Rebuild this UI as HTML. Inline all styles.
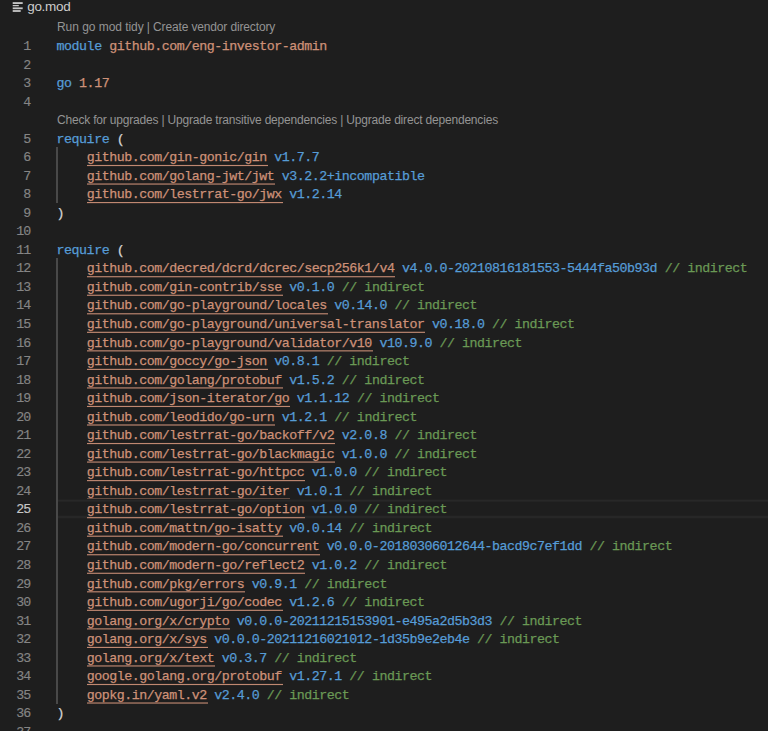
<!DOCTYPE html>
<html><head><meta charset="utf-8"><title>go.mod</title>
<style>
html,body{margin:0;padding:0;}
body{width:768px;height:731px;background:#1e1e1e;overflow:hidden;position:relative;font-family:"Liberation Mono",monospace;}
.title{position:absolute;left:27.2px;top:-1px;font-family:"Liberation Sans",sans-serif;font-size:13.5px;color:#cccccc;line-height:16px;white-space:pre;letter-spacing:-0.3px}
.icon{position:absolute;left:12px;top:2px}
.lens{position:absolute;left:57px;height:19px;line-height:19px;font-family:"Liberation Sans",sans-serif;font-size:12px;color:#949494;white-space:pre;letter-spacing:0px;}
.ln{position:absolute;left:0;width:30.4px;text-align:right;height:19px;line-height:19px;font-size:13.3px;letter-spacing:-0.9px;color:#858585;-webkit-text-stroke:0.15px}
.ln.act{color:#c6c6c6}
.code{position:absolute;left:56.6px;height:19px;line-height:19px;font-size:13.3px;letter-spacing:-0.473px;white-space:pre;color:#d4d4d4;-webkit-text-stroke:0.25px}
.guide{position:absolute;left:56px;width:2px;background:#494949}
.cur{position:absolute;left:58px;right:0;height:18.3px;margin-top:-0.7px;box-sizing:border-box;border-top:1px solid #282828;border-bottom:1px solid #282828}
.k{color:#569cd6}.s{color:#ce9178}.p{color:#d4d4d4}.v{color:#569cd6}.c{color:#6a9955}
.u{color:#ce9178}
.cb{position:absolute;left:58px;right:0;height:1px}
.ul{position:absolute;height:1px;background:#ce9178}
</style></head><body>
<svg class="icon" width="16" height="16" viewBox="0 0 16 16"><g fill="#c6c6c6"><rect x="0.7" y="0.15" width="10" height="1.85"/><rect x="0.7" y="2.95" width="6.1" height="1.3"/><rect x="0.7" y="5.4" width="10" height="1.8"/><rect x="0.7" y="8.1" width="8" height="1.8"/></g></svg>
<div class="title">go.mod</div>
<div class="lens" style="top:18px;letter-spacing:-0.1px"><span style="letter-spacing:-0.05px">Run go mod tidy</span><span style="letter-spacing:-0.14px"> | Create vendor directory</span></div>
<div class="ln" style="top:37px">1</div>
<div class="code" style="top:37px"><span class="k">module</span><span class="s"> github.com/eng-investor-admin</span></div>
<div class="ln" style="top:56px">2</div>
<div class="ln" style="top:74px">3</div>
<div class="code" style="top:74px"><span class="k">go</span><span class="s"> 1.17</span></div>
<div class="ln" style="top:93px">4</div>
<div class="lens" style="top:111px;letter-spacing:-0.19px">Check for upgrades | Upgrade transitive dependencies | Upgrade direct dependencies</div>
<div class="ln" style="top:130px">5</div>
<div class="code" style="top:130px"><span class="k">require</span><span class="p"> (</span></div>
<div class="ln" style="top:148px">6</div>
<div class="code" style="top:148px">    <span class="u">github.com/gin-gonic/gin</span><span class="v"> v1.7.7</span></div>
<div class="ul" style="top:164px;left:87.03px;width:180.79px;opacity:0.06"></div>
<div class="ul" style="top:165px;left:87.03px;width:180.79px;opacity:0.92"></div>
<div class="ul" style="top:166px;left:87.03px;width:180.79px;opacity:0.08"></div>
<div class="ln" style="top:167px">7</div>
<div class="code" style="top:167px">    <span class="u">github.com/golang-jwt/jwt</span><span class="v"> v3.2.2+incompatible</span></div>
<div class="ul" style="top:183px;left:87.03px;width:188.3px;opacity:0.49"></div>
<div class="ul" style="top:184px;left:87.03px;width:188.3px;opacity:0.57"></div>
<div class="ln" style="top:185px">8</div>
<div class="code" style="top:185px">    <span class="u">github.com/lestrrat-go/jwx</span><span class="v"> v1.2.14</span></div>
<div class="ul" style="top:202px;left:87.03px;width:195.81px;opacity:0.92"></div>
<div class="ul" style="top:203px;left:87.03px;width:195.81px;opacity:0.14"></div>
<div class="ln" style="top:204px">9</div>
<div class="code" style="top:204px"><span class="p">)</span></div>
<div class="ln" style="top:222px">10</div>
<div class="ln" style="top:241px">11</div>
<div class="code" style="top:241px"><span class="k">require</span><span class="p"> (</span></div>
<div class="ln" style="top:259px">12</div>
<div class="code" style="top:259px">    <span class="u">github.com/decred/dcrd/dcrec/secp256k1/v4</span><span class="v"> v4.0.0-20210816181553-5444fa50b93d</span><span class="c"> // indirect</span></div>
<div class="ul" style="top:276px;left:87.03px;width:308.43px;opacity:0.79"></div>
<div class="ul" style="top:277px;left:87.03px;width:308.43px;opacity:0.27"></div>
<div class="ln" style="top:278px">13</div>
<div class="code" style="top:278px">    <span class="u">github.com/gin-contrib/sse</span><span class="v"> v0.1.0</span><span class="c"> // indirect</span></div>
<div class="ul" style="top:294px;left:87.03px;width:195.81px;opacity:0.29"></div>
<div class="ul" style="top:295px;left:87.03px;width:195.81px;opacity:0.76"></div>
<div class="ln" style="top:296px">14</div>
<div class="code" style="top:296px">    <span class="u">github.com/go-playground/locales</span><span class="v"> v0.14.0</span><span class="c"> // indirect</span></div>
<div class="ul" style="top:313px;left:87.03px;width:240.86px;opacity:0.72"></div>
<div class="ul" style="top:314px;left:87.03px;width:240.86px;opacity:0.34"></div>
<div class="ln" style="top:315px">15</div>
<div class="code" style="top:315px">    <span class="u">github.com/go-playground/universal-translator</span><span class="v"> v0.18.0</span><span class="c"> // indirect</span></div>
<div class="ul" style="top:331px;left:87.03px;width:338.46px;opacity:0.23"></div>
<div class="ul" style="top:332px;left:87.03px;width:338.46px;opacity:0.83"></div>
<div class="ln" style="top:334px">16</div>
<div class="code" style="top:334px">    <span class="u">github.com/go-playground/validator/v10</span><span class="v"> v10.9.0</span><span class="c"> // indirect</span></div>
<div class="ul" style="top:350px;left:87.03px;width:285.9px;opacity:0.66"></div>
<div class="ul" style="top:351px;left:87.03px;width:285.9px;opacity:0.4"></div>
<div class="ln" style="top:352px">17</div>
<div class="code" style="top:352px">    <span class="u">github.com/goccy/go-json</span><span class="v"> v0.8.1</span><span class="c"> // indirect</span></div>
<div class="ul" style="top:368px;left:87.03px;width:180.79px;opacity:0.17"></div>
<div class="ul" style="top:369px;left:87.03px;width:180.79px;opacity:0.89"></div>
<div class="ln" style="top:371px">18</div>
<div class="code" style="top:371px">    <span class="u">github.com/golang/protobuf</span><span class="v"> v1.5.2</span><span class="c"> // indirect</span></div>
<div class="ul" style="top:387px;left:87.03px;width:195.81px;opacity:0.59"></div>
<div class="ul" style="top:388px;left:87.03px;width:195.81px;opacity:0.46"></div>
<div class="ln" style="top:389px">19</div>
<div class="code" style="top:389px">    <span class="u">github.com/json-iterator/go</span><span class="v"> v1.1.12</span><span class="c"> // indirect</span></div>
<div class="ul" style="top:405px;left:87.03px;width:203.32px;opacity:0.1"></div>
<div class="ul" style="top:406px;left:87.03px;width:203.32px;opacity:0.92"></div>
<div class="ul" style="top:407px;left:87.03px;width:203.32px;opacity:0.04"></div>
<div class="ln" style="top:408px">20</div>
<div class="code" style="top:408px">    <span class="u">github.com/leodido/go-urn</span><span class="v"> v1.2.1</span><span class="c"> // indirect</span></div>
<div class="ul" style="top:424px;left:87.03px;width:188.3px;opacity:0.53"></div>
<div class="ul" style="top:425px;left:87.03px;width:188.3px;opacity:0.53"></div>
<div class="ln" style="top:426px">21</div>
<div class="code" style="top:426px">    <span class="u">github.com/lestrrat-go/backoff/v2</span><span class="v"> v2.0.8</span><span class="c"> // indirect</span></div>
<div class="ul" style="top:442px;left:87.03px;width:248.36px;opacity:0.04"></div>
<div class="ul" style="top:443px;left:87.03px;width:248.36px;opacity:0.92"></div>
<div class="ul" style="top:444px;left:87.03px;width:248.36px;opacity:0.1"></div>
<div class="ln" style="top:445px">22</div>
<div class="code" style="top:445px">    <span class="u">github.com/lestrrat-go/blackmagic</span><span class="v"> v1.0.0</span><span class="c"> // indirect</span></div>
<div class="ul" style="top:461px;left:87.03px;width:248.36px;opacity:0.46"></div>
<div class="ul" style="top:462px;left:87.03px;width:248.36px;opacity:0.59"></div>
<div class="ln" style="top:463px">23</div>
<div class="code" style="top:463px">    <span class="u">github.com/lestrrat-go/httpcc</span><span class="v"> v1.0.0</span><span class="c"> // indirect</span></div>
<div class="ul" style="top:480px;left:87.03px;width:218.33px;opacity:0.89"></div>
<div class="ul" style="top:481px;left:87.03px;width:218.33px;opacity:0.17"></div>
<div class="ln" style="top:482px">24</div>
<div class="code" style="top:482px">    <span class="u">github.com/lestrrat-go/iter</span><span class="v"> v1.0.1</span><span class="c"> // indirect</span></div>
<div class="ul" style="top:498px;left:87.03px;width:203.32px;opacity:0.4"></div>
<div class="ul" style="top:499px;left:87.03px;width:203.32px;opacity:0.66"></div>
<div class="cb" style="top:499px;background:#212121"></div>
<div class="cb" style="top:500px;background:#282828"></div>
<div class="cb" style="top:501px;background:#242424"></div>
<div class="cb" style="top:515px;background:#202020"></div>
<div class="cb" style="top:516px;background:#272727"></div>
<div class="cb" style="top:517px;background:#272727"></div>
<div class="cb" style="top:518px;background:#202020"></div>
<div class="ln act" style="top:500px">25</div>
<div class="code" style="top:500px">    <span class="u">github.com/lestrrat-go/option</span><span class="v"> v1.0.0</span><span class="c"> // indirect</span></div>
<div class="ul" style="top:517px;left:87.03px;width:218.33px;opacity:0.83"></div>
<div class="ul" style="top:518px;left:87.03px;width:218.33px;opacity:0.23"></div>
<div class="ln" style="top:519px">26</div>
<div class="code" style="top:519px">    <span class="u">github.com/mattn/go-isatty</span><span class="v"> v0.0.14</span><span class="c"> // indirect</span></div>
<div class="ul" style="top:535px;left:87.03px;width:195.81px;opacity:0.34"></div>
<div class="ul" style="top:536px;left:87.03px;width:195.81px;opacity:0.72"></div>
<div class="ln" style="top:537px">27</div>
<div class="code" style="top:537px">    <span class="u">github.com/modern-go/concurrent</span><span class="v"> v0.0.0-20180306012644-bacd9c7ef1dd</span><span class="c"> // indirect</span></div>
<div class="ul" style="top:554px;left:87.03px;width:233.35px;opacity:0.76"></div>
<div class="ul" style="top:555px;left:87.03px;width:233.35px;opacity:0.29"></div>
<div class="ln" style="top:556px">28</div>
<div class="code" style="top:556px">    <span class="u">github.com/modern-go/reflect2</span><span class="v"> v1.0.2</span><span class="c"> // indirect</span></div>
<div class="ul" style="top:572px;left:87.03px;width:218.33px;opacity:0.27"></div>
<div class="ul" style="top:573px;left:87.03px;width:218.33px;opacity:0.79"></div>
<div class="ln" style="top:575px">29</div>
<div class="code" style="top:575px">    <span class="u">github.com/pkg/errors</span><span class="v"> v0.9.1</span><span class="c"> // indirect</span></div>
<div class="ul" style="top:591px;left:87.03px;width:158.27px;opacity:0.7"></div>
<div class="ul" style="top:592px;left:87.03px;width:158.27px;opacity:0.36"></div>
<div class="ln" style="top:593px">30</div>
<div class="code" style="top:593px">    <span class="u">github.com/ugorji/go/codec</span><span class="v"> v1.2.6</span><span class="c"> // indirect</span></div>
<div class="ul" style="top:609px;left:87.03px;width:195.81px;opacity:0.21"></div>
<div class="ul" style="top:610px;left:87.03px;width:195.81px;opacity:0.85"></div>
<div class="ln" style="top:612px">31</div>
<div class="code" style="top:612px">    <span class="u">golang.org/x/crypto</span><span class="v"> v0.0.0-20211215153901-e495a2d5b3d3</span><span class="c"> // indirect</span></div>
<div class="ul" style="top:628px;left:87.03px;width:143.25px;opacity:0.63"></div>
<div class="ul" style="top:629px;left:87.03px;width:143.25px;opacity:0.42"></div>
<div class="ln" style="top:630px">32</div>
<div class="code" style="top:630px">    <span class="u">golang.org/x/sys</span><span class="v"> v0.0.0-20211216021012-1d35b9e2eb4e</span><span class="c"> // indirect</span></div>
<div class="ul" style="top:646px;left:87.03px;width:120.73px;opacity:0.14"></div>
<div class="ul" style="top:647px;left:87.03px;width:120.73px;opacity:0.92"></div>
<div class="ln" style="top:649px">33</div>
<div class="code" style="top:649px">    <span class="u">golang.org/x/text</span><span class="v"> v0.3.7</span><span class="c"> // indirect</span></div>
<div class="ul" style="top:665px;left:87.03px;width:128.24px;opacity:0.57"></div>
<div class="ul" style="top:666px;left:87.03px;width:128.24px;opacity:0.49"></div>
<div class="ln" style="top:667px">34</div>
<div class="code" style="top:667px">    <span class="u">google.golang.org/protobuf</span><span class="v"> v1.27.1</span><span class="c"> // indirect</span></div>
<div class="ul" style="top:683px;left:87.03px;width:195.81px;opacity:0.08"></div>
<div class="ul" style="top:684px;left:87.03px;width:195.81px;opacity:0.92"></div>
<div class="ul" style="top:685px;left:87.03px;width:195.81px;opacity:0.06"></div>
<div class="ln" style="top:686px">35</div>
<div class="code" style="top:686px">    <span class="u">gopkg.in/yaml.v2</span><span class="v"> v2.4.0</span><span class="c"> // indirect</span></div>
<div class="ul" style="top:702px;left:87.03px;width:120.73px;opacity:0.51"></div>
<div class="ul" style="top:703px;left:87.03px;width:120.73px;opacity:0.55"></div>
<div class="ln" style="top:704px">36</div>
<div class="code" style="top:704px"><span class="p">)</span></div>
<div class="ln" style="top:723px">37</div>
<div class="guide" style="top:147px;height:56px"></div><div class="guide" style="top:258px;height:446px"></div>
</body></html>
